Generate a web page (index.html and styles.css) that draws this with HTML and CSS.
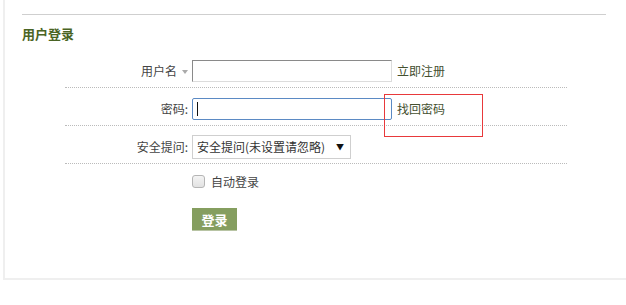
FILE: index.html
```html
<!DOCTYPE html>
<html lang="zh-CN">
<head>
  <meta charset="UTF-8">
  <title>用户登录</title>
  <link rel="stylesheet" href="styles.css">
</head>
<body>
  <div class="panel">
    <div class="rule"></div>
    <h2 class="title">用户登录</h2>

    <form class="login">
      <div class="row">
        <label class="label">用户名<span class="drop"></span></label>
        <input class="field" type="text">
        <a class="link" href="#">立即注册</a>
      </div>
      <div class="row row-mark">
        <label class="label">密码:</label>
        <span class="focus-wrap">
          <input class="field field-focus" type="password">
          <span class="caret"></span>
        </span>
        <a class="link" href="#">找回密码</a>
        <span class="mark"></span>
      </div>
      <div class="row">
        <label class="label">安全提问:</label>
        <span class="select-wrap">
          <select class="select">
            <option>安全提问(未设置请忽略)</option>
          </select>
        </span>
      </div>

      <div class="check-row">
        <span class="checkbox"></span>
        <span class="check-text">自动登录</span>
      </div>

      <div class="submit-row">
        <button class="btn" type="button">登录</button>
      </div>
    </form>
  </div>
</body>
</html>
```

FILE: styles.css
```css
* {
  margin: 0;
  padding: 0;
  box-sizing: border-box;
}

body {
  font-family: "Noto Sans CJK SC", "Noto Sans", sans-serif;
  font-size: 12px;
  color: #333;
  background: #fff;
}

.panel {
  margin-left: 3px;
  height: 280px;
  border-left: 2px solid #efefef;
  border-bottom: 2px solid #efefef;
  padding: 14px 20px 0 17px;
}

.rule {
  height: 1px;
  background: #cfcfcf;
}

.title {
  margin-top: 10px;
  font-size: 13px;
  line-height: 18px;
  font-weight: 700;
  color: #4a6424;
}

.login {
  margin: 7px 0 0 43px;
  width: 502px;
}

.row {
  position: relative;
  display: flex;
  align-items: center;
  height: 38px;
  padding-top: 4px;
  border-bottom: 1px dotted #bbb;
}

.label {
  width: 123px;
  margin-right: 4px;
  text-align: right;
  color: #444;
}

.drop {
  display: inline-block;
  margin: 0 0 1px 5px;
  border-left: 3px solid transparent;
  border-right: 3px solid transparent;
  border-top: 4px solid #aaa;
  vertical-align: middle;
}

.field {
  width: 200px;
  height: 22px;
  border: 1px solid;
  border-color: #8a8a8a #dcdcdc #dcdcdc #8a8a8a;
  outline: none;
  font: inherit;
  padding: 0 4px;
}

.focus-wrap {
  position: relative;
  display: inline-block;
  height: 22px;
}

.field-focus {
  border: 1px solid #5b8ac4;
  border-radius: 2px;
}

.caret {
  position: absolute;
  left: 5px;
  top: 4px;
  width: 1px;
  height: 14px;
  background: #111;
}

.link {
  margin-left: 5px;
  color: #44502f;
  text-decoration: none;
}

.mark {
  position: absolute;
  left: 319px;
  top: 6px;
  width: 99px;
  height: 43px;
  border: 1px solid #e8393b;
}

.select-wrap {
  position: relative;
  display: inline-block;
}

.select {
  appearance: none;
  -webkit-appearance: none;
  width: 159px;
  height: 24px;
  border: 1px solid #cfcfcf;
  background: #fff;
  font: inherit;
  color: #333;
  padding: 0 4px;
}

.select-wrap::after {
  content: "▼";
  position: absolute;
  right: 7px;
  top: 6px;
  font-size: 8px;
  color: #111;
  pointer-events: none;
}

.check-row {
  display: flex;
  align-items: center;
  margin-top: 9px;
  padding-left: 127px;
}

.checkbox {
  width: 13px;
  height: 13px;
  border: 1px solid #b5b5b5;
  border-radius: 3px;
  background: linear-gradient(#f4f4f4, #e2e2e2);
}

.check-text {
  margin-left: 6px;
  color: #444;
}

.submit-row {
  margin-top: 18px;
  padding-left: 127px;
}

.btn {
  width: 45px;
  height: 23px;
  border: none;
  border-bottom: 1px solid #b8c4a4;
  background: #859e5f;
  color: #fff;
  font: inherit;
  font-size: 13px;
  font-weight: 700;
}
```
